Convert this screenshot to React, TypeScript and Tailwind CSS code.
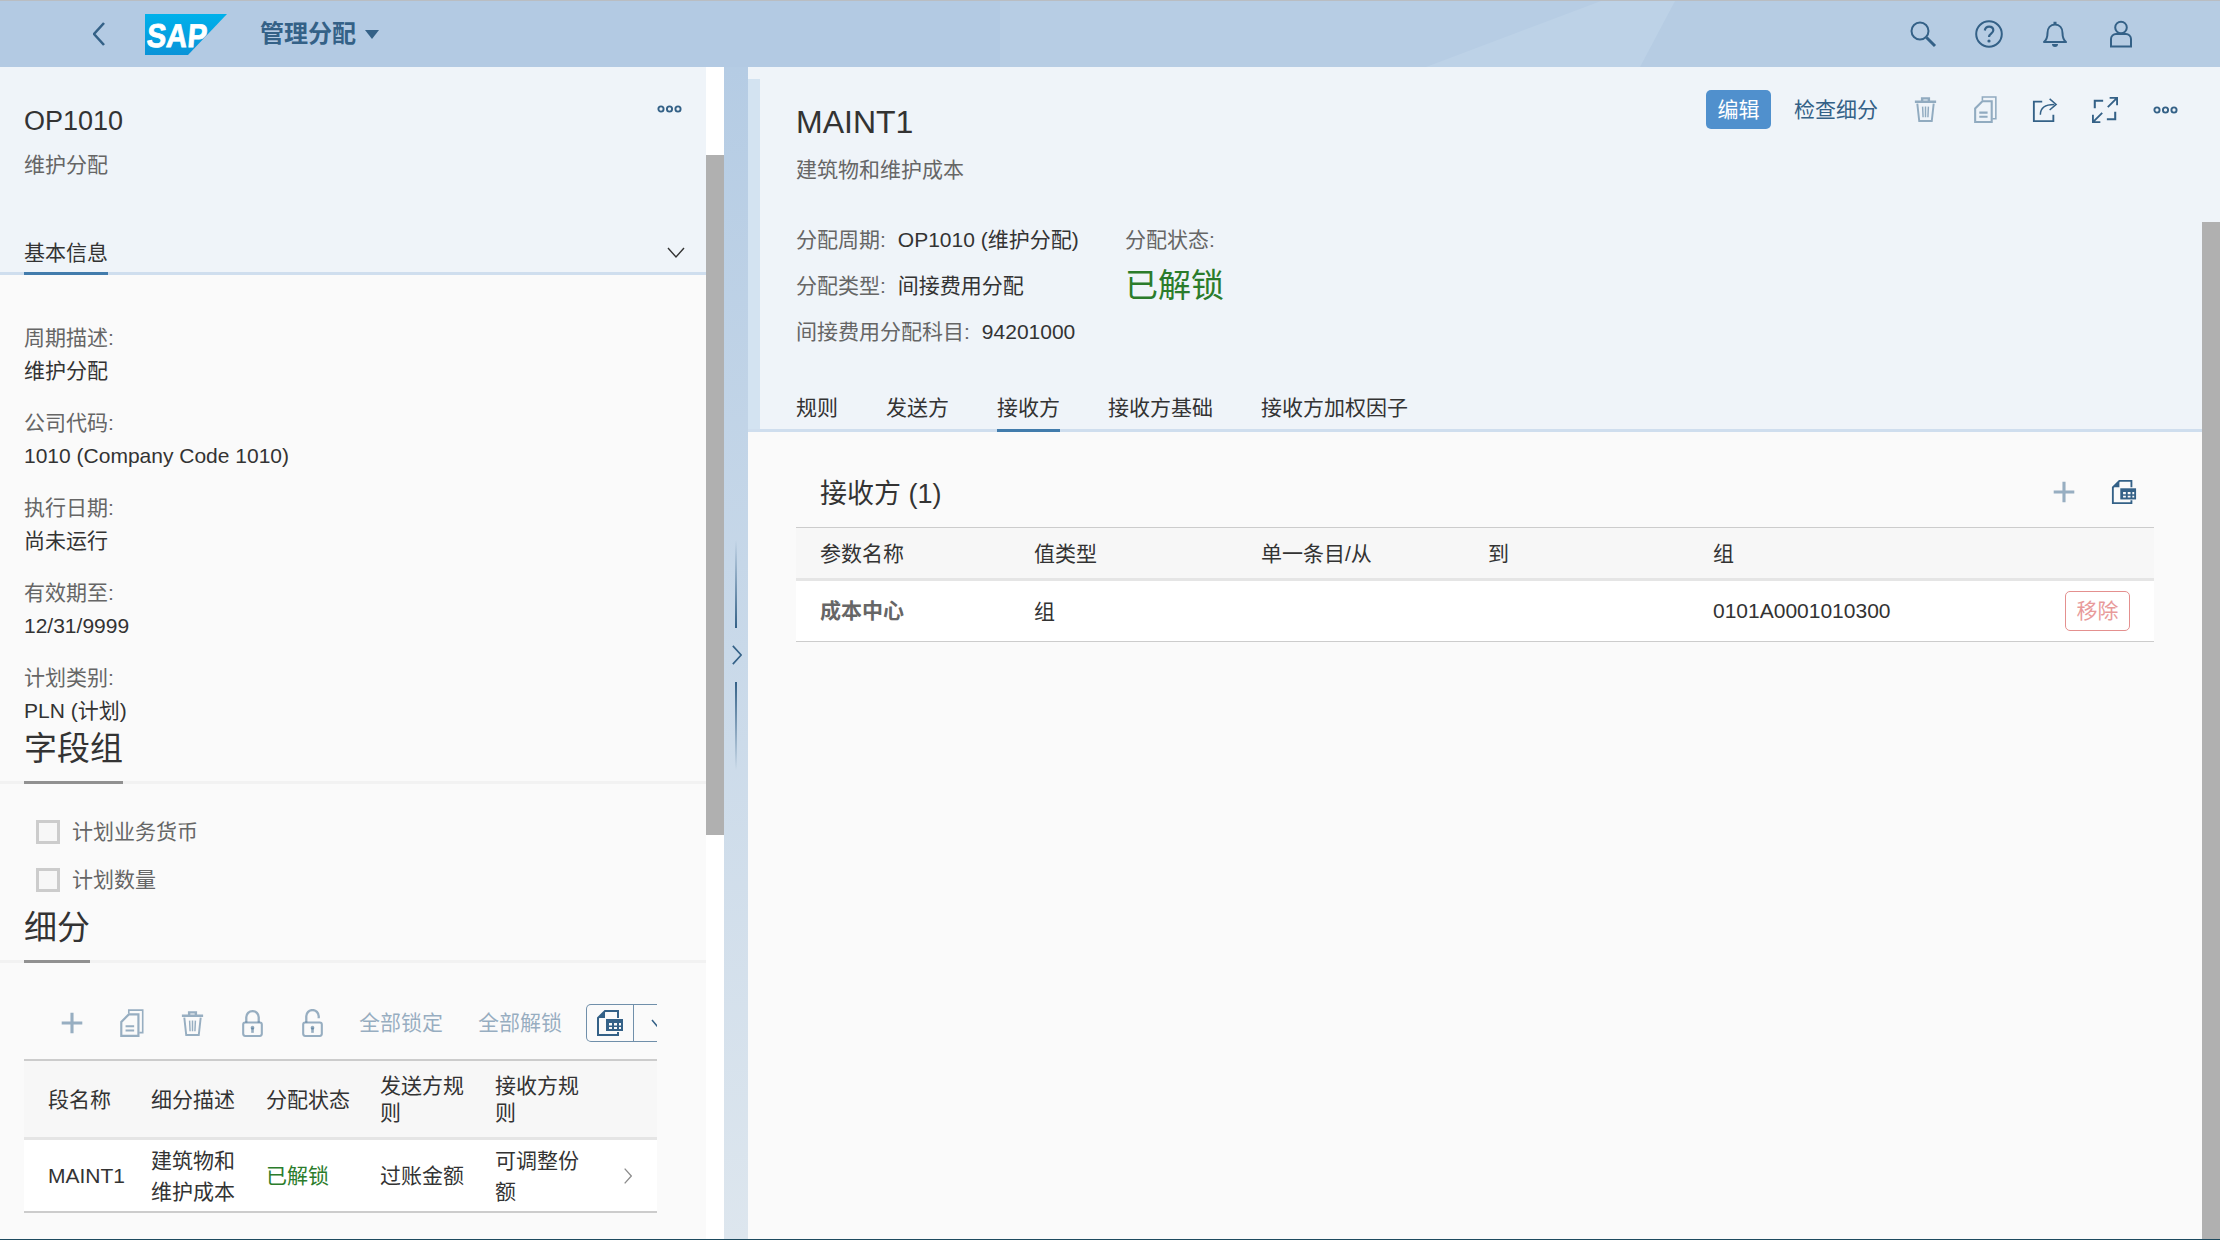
import React from "react";

const font = "[font-family:'Liberation_Sans','Noto_Sans_CJK_SC',sans-serif]";

type IP = { className?: string; s?: number };

function Svg({ className, s = 28, children }: IP & { children: React.ReactNode }) {
  return (
    <svg width={s} height={s} viewBox="0 0 28 28" fill="none" stroke="currentColor" strokeWidth={2} className={className}>
      {children}
    </svg>
  );
}
const Plus = (p: IP) => (<Svg {...p}><path d="M14 2v24M2 14h24" strokeWidth={3.6} /></Svg>);
const Trash = (p: IP) => (
  <Svg {...p}>
    <path d="M3 6h22M10.500 5V2.500h7V5" strokeWidth={2.500} />
    <path d="M5.500 8l2 18h13l2-18" strokeWidth={2} />
    <path d="M11 11l.5 11M14 11v11M17 11l-.5 11" strokeWidth={1.500} />
  </Svg>
);
const Copy = (p: IP) => (
  <Svg {...p}>
    <path d="M11 5V2h13v21h-3" strokeWidth={1.500} />
    <path d="M11 6h9v20H4V13z" strokeWidth={2} />
    <path d="M8 17h8M8 21h8" strokeWidth={2} />
  </Svg>
);
const Lock = (p: IP) => (
  <Svg {...p}>
    <path d="M8 13V8a6 6 0 0 1 12 0v5" strokeWidth={2.200} />
    <rect x="5" y="13" width="18" height="13" rx="2" strokeWidth={2} />
    <circle cx="14" cy="18" r="1.800" fill="currentColor" stroke="none" />
    <path d="M14 18v5" strokeWidth={2.500} />
  </Svg>
);
const Unlock = (p: IP) => (
  <Svg {...p}>
    <path d="M8 13V7a6 6 0 0 1 12 0v2" strokeWidth={2.200} />
    <rect x="5" y="13" width="18" height="13" rx="2" strokeWidth={2} />
    <circle cx="14" cy="18" r="1.800" fill="currentColor" stroke="none" />
    <path d="M14 18v5" strokeWidth={2.500} />
  </Svg>
);
const TableExport = (p: IP) => (
  <Svg {...p}>
    <path d="M22 9V2H9L2 9v17h20v-3" strokeWidth={2} />
    <path d="M9 2L2 9h7z" fill="currentColor" stroke="none" />
    <rect x="10" y="10" width="17" height="12" fill="currentColor" stroke="none" />
    <path d="M13 14h3v2.500h-3zM18 14h3v2.500h-3zM23 14h2v2.500h-2zM13 18h3v2h-3zM18 18h3v2h-3zM23 18h2v2h-2z" fill="#fafafa" stroke="none" />
  </Svg>
);
const Share = (p: IP) => (
  <Svg {...p}>
    <path d="M11 5H2v21h21v-7" strokeWidth={2} />
    <path d="M9 19c0-7 5-11 15-11" strokeWidth={1.600} />
    <path d="M19 2l7 6-7 6" strokeWidth={1.600} />
  </Svg>
);
const FullScreen = (p: IP) => (
  <Svg {...p}>
    <path d="M12 4H3v8M25 16v8h-9" strokeWidth={2.200} />
    <path d="M17 11L27 1M19 1h8v8" strokeWidth={2} />
    <path d="M11 17L1 27M9 27H1v-8" strokeWidth={2} />
  </Svg>
);
const Dots = (p: IP) => (
  <svg width="25" height="10" viewBox="0 0 25 10" fill="none" stroke="currentColor" strokeWidth={1.900} className={p.className}>
    <circle cx="4" cy="5" r="2.600" />
    <circle cx="12.500" cy="5" r="2.600" />
    <circle cx="21" cy="5" r="2.600" />
  </svg>
);
const Search = (p: IP) => (
  <Svg {...p}>
    <circle cx="11" cy="11" r="8.500" strokeWidth={2} />
    <path d="M17.500 17.500L26 26" strokeWidth={3} />
  </Svg>
);
const Help = (p: IP) => (
  <Svg {...p}>
    <circle cx="14" cy="14" r="12.800" strokeWidth={2} />
    <path d="M9.800 10.500c.4-2.500 2-3.800 4.300-3.800 2.500 0 4.200 1.500 4.200 3.600 0 3.400-4.300 3.300-4.300 6.700" strokeWidth={2.200} />
    <circle cx="14" cy="21" r="1.600" fill="currentColor" stroke="none" />
  </Svg>
);
const Bell = (p: IP) => (
  <Svg {...p}>
    <path d="M3 22c3-2.500 3.500-5 3.500-9 0-5 3-8.500 7.500-8.500s7.500 3.500 7.500 8.500c0 4 .5 6.500 3.500 9z" strokeWidth={2} strokeLinejoin="round" />
    <path d="M12.500 3h3" strokeWidth={2.500} />
    <path d="M11 24a3 3 0 0 0 6 0z" fill="currentColor" stroke="none" />
  </Svg>
);
const User = (p: IP) => (
  <Svg {...p}>
    <circle cx="14" cy="7.500" r="5.800" strokeWidth={2} />
    <path d="M4 26.500V19c0-3 2.500-5 5-5h10c2.500 0 5 2 5 5v7.500z" strokeWidth={2} />
  </Svg>
);
const Chevron = ({ dir, className, w = 12, h = 24, sw = 2 }: { dir: "l" | "r"; className?: string; w?: number; h?: number; sw?: number }) => (
  <svg width={w} height={h} viewBox="0 0 12 24" fill="none" stroke="currentColor" strokeWidth={sw} className={className}>
    <path d={dir === "l" ? "M11 1L1 12l10 11" : "M1 1l10 11L1 23"} />
  </svg>
);

function SapLogo() {
  return (
    <svg width="82" height="41" viewBox="0 0 82 41" className="shrink-0">
      <defs>
        <linearGradient id="sapg" x1="0" y1="0" x2="0" y2="1">
          <stop offset="0" stopColor="#00b1eb" />
          <stop offset="1" stopColor="#0a93d8" />
        </linearGradient>
      </defs>
      <polygon points="0,0 82,0 43,41 0,41" fill="url(#sapg)" />
      <text x="4" y="33" transform="skewX(-5)" fill="#fff" stroke="#fff" strokeWidth="0.8" fontFamily="'Liberation Sans',sans-serif" fontWeight="700" fontSize="33" textLength="60" lengthAdjust="spacingAndGlyphs">SAP</text>
    </svg>
  );
}

function Field({ label, value }: { label: string; value: string }) {
  return (
    <div className="mb-[19px]">
      <div className="h-[33px] leading-[33px] text-[#666666]">{label}</div>
      <div className="h-[33px] leading-[33px] text-[#333333]">{value}</div>
    </div>
  );
}

function SectionHead({ title, barW }: { title: string; barW: string }) {
  return (
    <div className="border-b-[3px] border-[#f2f2f2] shrink-0">
      <div className={`ml-[24px] ${barW} -mb-[3px] border-b-[3px] border-[#919191] pb-[10px]`}>
        <div className="h-[44px] leading-[44px] text-[33px] text-[#333333] whitespace-nowrap">{title}</div>
      </div>
    </div>
  );
}

function Check({ label }: { label: string }) {
  return (
    <div className="flex items-center h-[24px] ml-[36px] gap-[12px]">
      <span className="w-[24px] h-[24px] border-[3px] border-[#cccccc] bg-[#f7f7f7]" />
      <span className="text-[#666666]">{label}</span>
    </div>
  );
}

function LeftPanel() {
  return (
    <div className="w-[706px] shrink-0 flex flex-col bg-[#fafafa] overflow-hidden">
      <div className="h-[208px] shrink-0 bg-[#eff4f9] border-b-[3px] border-[#cfdeee] flex flex-col">
        <div className="flex justify-between pl-[24px] pr-[24px] pt-[36px]">
          <div className="h-[36px] leading-[36px] text-[27px] text-[#333333]">OP1010</div>
          <Dots className="text-[#346187] mt-[1px]" />
        </div>
        <div className="pl-[24px] mt-[11px] h-[30px] leading-[30px] text-[#666666]">维护分配</div>
        <div className="flex-1" />
        <div className="flex justify-between items-start pl-[24px] pr-[20px]">
          <div className="h-[37px] leading-[35px] text-[#333333] w-[84px] -mb-[3px] border-b-[3px] border-[#427cac] box-content">基本信息</div>
          <svg width="20" height="12" viewBox="0 0 20 12" fill="none" stroke="#333333" strokeWidth="1.400" className="mt-[12px]">
            <path d="M2 1l8 9 8-9" />
          </svg>
        </div>
      </div>
      <div className="pl-[24px] pt-[46px] h-[452px] shrink-0 overflow-hidden">
        <Field label="周期描述:" value="维护分配" />
        <Field label="公司代码:" value="1010 (Company Code 1010)" />
        <Field label="执行日期:" value="尚未运行" />
        <Field label="有效期至:" value="12/31/9999" />
        <Field label="计划类别:" value="PLN (计划)" />
      </div>
      <SectionHead title="字段组" barW="w-[99px]" />
      <div className="pt-[36px] flex flex-col gap-[24px] h-[122px] shrink-0">
        <Check label="计划业务货币" />
        <Check label="计划数量" />
      </div>
      <SectionHead title="细分" barW="w-[66px]" />
      <div className="ml-[24px] w-[633px] flex-1 flex flex-col overflow-hidden">
        <div className="mt-[41px] h-[38px] flex items-center shrink-0 whitespace-nowrap overflow-hidden text-[#346187]/50">
          <span className="ml-[18px] w-[60px] shrink-0 flex justify-center"><Plus s={24} /></span>
          <span className="w-[60px] shrink-0 flex justify-center"><Copy s={30} /></span>
          <span className="w-[60px] shrink-0 flex justify-center"><Trash s={27} /></span>
          <span className="w-[60px] shrink-0 flex justify-center"><Lock s={29} /></span>
          <span className="w-[60px] shrink-0 flex justify-center"><Unlock s={29} /></span>
          <span className="ml-[17px] w-[84px] shrink-0">全部锁定</span>
          <span className="ml-[35px] w-[84px] shrink-0">全部解锁</span>
          <div className="ml-[24px] w-[100px] shrink-0 h-[38px] flex border border-[#346187]/70 rounded-[5px] bg-[#fafafa] text-[#346187]">
            <span className="w-[47px] shrink-0 border-r border-[#346187]/70 flex items-center justify-center"><TableExport s={28} /></span>
            <span className="pl-[17px] flex items-center">
              <svg width="12" height="8" viewBox="0 0 12 8" fill="none" stroke="currentColor" strokeWidth="1.500"><path d="M1 1l5 6 5-6" /></svg>
            </span>
          </div>
        </div>
        <div className="mt-[17px] border-t-[2px] border-[#cccccc] bg-[#f7f7f7] border-b-[3px] border-b-[#e5e5e5] h-[81px] shrink-0 grid grid-cols-[127px_115px_114px_115px_162px] items-center text-[#333333] leading-[27px]">
          <div className="pl-[24px]">段名称</div>
          <div>细分描述</div>
          <div>分配状态</div>
          <div className="pr-[22px]">发送方规则</div>
          <div className="pr-[70px]">接收方规则</div>
        </div>
        <div className="bg-white border-b-[2px] border-[#cccccc] h-[73px] shrink-0 grid grid-cols-[127px_115px_114px_115px_121px_41px] items-center text-[#333333] leading-[31px]">
          <div className="pl-[24px]">MAINT1</div>
          <div className="pr-[22px]">建筑物和维护成本</div>
          <div className="text-[#2b7c2b]">已解锁</div>
          <div>过账金额</div>
          <div className="pr-[30px]">可调整份额</div>
          <div className="flex pl-[8px] text-[#8c8c8c]"><Chevron dir="r" w={8} h={16} /></div>
        </div>
      </div>
    </div>
  );
}

function ScrollTrack({ top, bg }: { top: string; bg: string }) {
  return (
    <div className={`w-[18px] shrink-0 flex flex-col ${bg}`}>
      <div className={`${top} shrink-0`} />
      <div className="flex-1 bg-[#b0b0b0]" />
    </div>
  );
}

function LeftScrollTrack() {
  return (
    <div className="w-[18px] shrink-0 flex flex-col bg-white">
      <div className="h-[88px] shrink-0" />
      <div className="h-[680px] shrink-0 bg-[#b0b0b0]" />
    </div>
  );
}

function Splitter() {
  return (
    <div className="w-[24px] shrink-0 flex flex-col items-center bg-[linear-gradient(180deg,#b5cce4_0%,#dde6ee_100%)] pt-[473px]">
      <div className="w-[1.5px] h-[88px] bg-[linear-gradient(180deg,transparent,#346187)]" />
      <Chevron dir="r" w={10} h={20} className="text-[#346187] my-[17px] ml-[1px]" />
      <div className="w-[1.5px] h-[88px] bg-[linear-gradient(0deg,transparent,#346187)]" />
    </div>
  );
}

function Meta({ k, v }: { k: string; v: string }) {
  return (
    <div className="flex h-[46px] items-center whitespace-nowrap">
      <span className="text-[#666666]">{k}</span>
      <span className="ml-[12px] text-[#333333]">{v}</span>
    </div>
  );
}

function RightPanel() {
  return (
    <div className="flex-1 flex min-w-0">
      <div className="flex-1 flex flex-col min-w-0 bg-[#fafafa]">
        <div className="h-[365px] shrink-0 bg-[#eff4f9] border-b-[3px] border-[#cfdeee] flex">
          <div className="w-[12px] mt-[12px] bg-[#d3e3f1] shrink-0" />
          <div className="flex-1 pl-[36px] flex flex-col">
            <div className="flex justify-between">
              <div>
                <div className="mt-[34px] h-[42px] leading-[42px] text-[32px] text-[#333333]">MAINT1</div>
                <div className="mt-[12px] h-[30px] leading-[30px] text-[#666666]">建筑物和维护成本</div>
              </div>
              <div className="flex items-center h-[39px] mt-[23px] pr-[7px] text-[#346187]">
                <span className="w-[65px] h-[39px] rounded-[5px] bg-[#5090cd] text-white flex items-center justify-center">编辑</span>
                <span className="ml-[23px] w-[84px]">检查细分</span>
                <span className="ml-[17px] w-[60px] flex justify-center text-[#346187]/50"><Trash s={27} /></span>
                <span className="w-[60px] flex justify-center text-[#346187]/50"><Copy s={29} /></span>
                <span className="w-[60px] flex justify-center"><Share s={26} /></span>
                <span className="w-[60px] flex justify-center"><FullScreen s={26} /></span>
                <span className="w-[60px] flex justify-center"><Dots /></span>
              </div>
            </div>
            <div className="mt-[32px] grid grid-cols-[329px_1fr]">
              <Meta k="分配周期:" v="OP1010 (维护分配)" />
              <div className="text-[#666666] h-[46px] leading-[46px]">分配状态:</div>
              <Meta k="分配类型:" v="间接费用分配" />
              <div className="text-[33px] text-[#2b7c2b] h-[46px] leading-[46px]">已解锁</div>
              <Meta k="间接费用分配科目:" v="94201000" />
            </div>
            <div className="flex-1" />
            <div className="flex gap-[48px] text-[#333333]">
              {["规则", "发送方", "接收方", "接收方基础", "接收方加权因子"].map((t) => (
                <div key={t} className={`h-[38px] leading-[33px] -mb-[3px] box-content border-b-[3px] ${t === "接收方" ? "border-[#427cac]" : "border-transparent"}`}>{t}</div>
              ))}
            </div>
          </div>
        </div>
        <div className="px-[48px] flex-1">
          <div className="h-[95px] pt-[30px] flex items-center justify-between">
            <div className="pl-[24px] text-[27px] text-[#333333]">接收方 (1)</div>
            <div className="flex items-center text-[#346187] -mt-[5px]">
              <span className="w-[60px] flex justify-center text-[#346187]/50"><Plus s={24} /></span>
              <span className="w-[60px] flex justify-center"><TableExport s={26} /></span>
            </div>
          </div>
          <div className="border-t border-[#cccccc] bg-[#f7f7f7] border-b-[3px] border-b-[#e5e5e5] h-[54px] pt-[2px] grid grid-cols-[239px_226px_228px_225px_1fr] items-center text-[#333333]">
            <div className="pl-[24px]">参数名称</div>
            <div className="-ml-[1px]">值类型</div>
            <div>单一条目/从</div>
            <div className="-ml-[1px]">到</div>
            <div className="-ml-[1px]">组</div>
          </div>
          <div className="bg-white border-b border-[#cccccc] h-[61px] grid grid-cols-[239px_226px_228px_225px_351px_65px] items-center text-[#333333]">
            <div className="pl-[24px] font-bold text-[#666666]">成本中心</div>
            <div className="-ml-[1px] pt-[2px]">组</div>
            <div />
            <div />
            <div className="-ml-[1px]">0101A0001010300</div>
            <div className="h-[40px] border border-[#e4908f] rounded-[5px] text-[#e89a9a] flex items-center justify-center">移除</div>
          </div>
        </div>
      </div>
      <ScrollTrack top="h-[155px]" bg="bg-[#eff4f9]" />
    </div>
  );
}

export default function App() {
  return (
    <div className={`${font} w-[2220px] h-[1240px] overflow-hidden flex flex-col text-[21px] bg-[#fafafa]`}>
      <header className="relative h-[67px] shrink-0 border-t border-[#b9bdc2] bg-[#b7cde4] flex items-center overflow-hidden">
        <svg className="absolute inset-0" width="2220" height="66" viewBox="0 0 2220 66">
          <rect x="0" y="0" width="1000" height="66" fill="#b3cae3" />
          <rect x="1640" y="0" width="580" height="66" fill="#b6cce3" />
          <polygon points="1601,0 1675,0 1640,66 1426,66" fill="#bdd2e7" />
        </svg>
        <div className="relative w-full flex items-center text-[#346187]">
          <Chevron dir="l" sw={2.6} className="ml-[93px]" />
          <span className="ml-[40px]"><SapLogo /></span>
          <span className="ml-[33px] text-[24px] font-bold">管理分配</span>
          <svg width="14" height="9" viewBox="0 0 14 9" className="ml-[9px]"><path d="M0 0h14L7 9z" fill="currentColor" /></svg>
          <div className="flex-1" />
          <span className="w-[66px] flex justify-center"><Search /></span>
          <span className="w-[66px] flex justify-center"><Help /></span>
          <span className="w-[66px] flex justify-center"><Bell /></span>
          <span className="w-[66px] flex justify-center"><User /></span>
          <span className="w-[66px]" />
        </div>
      </header>
      <main className="flex-1 flex min-h-0">
        <LeftPanel />
        <LeftScrollTrack />
        <Splitter />
        <RightPanel />
      </main>
      <div className="h-[1px] shrink-0 bg-[#1d4a5f]" />
    </div>
  );
}
